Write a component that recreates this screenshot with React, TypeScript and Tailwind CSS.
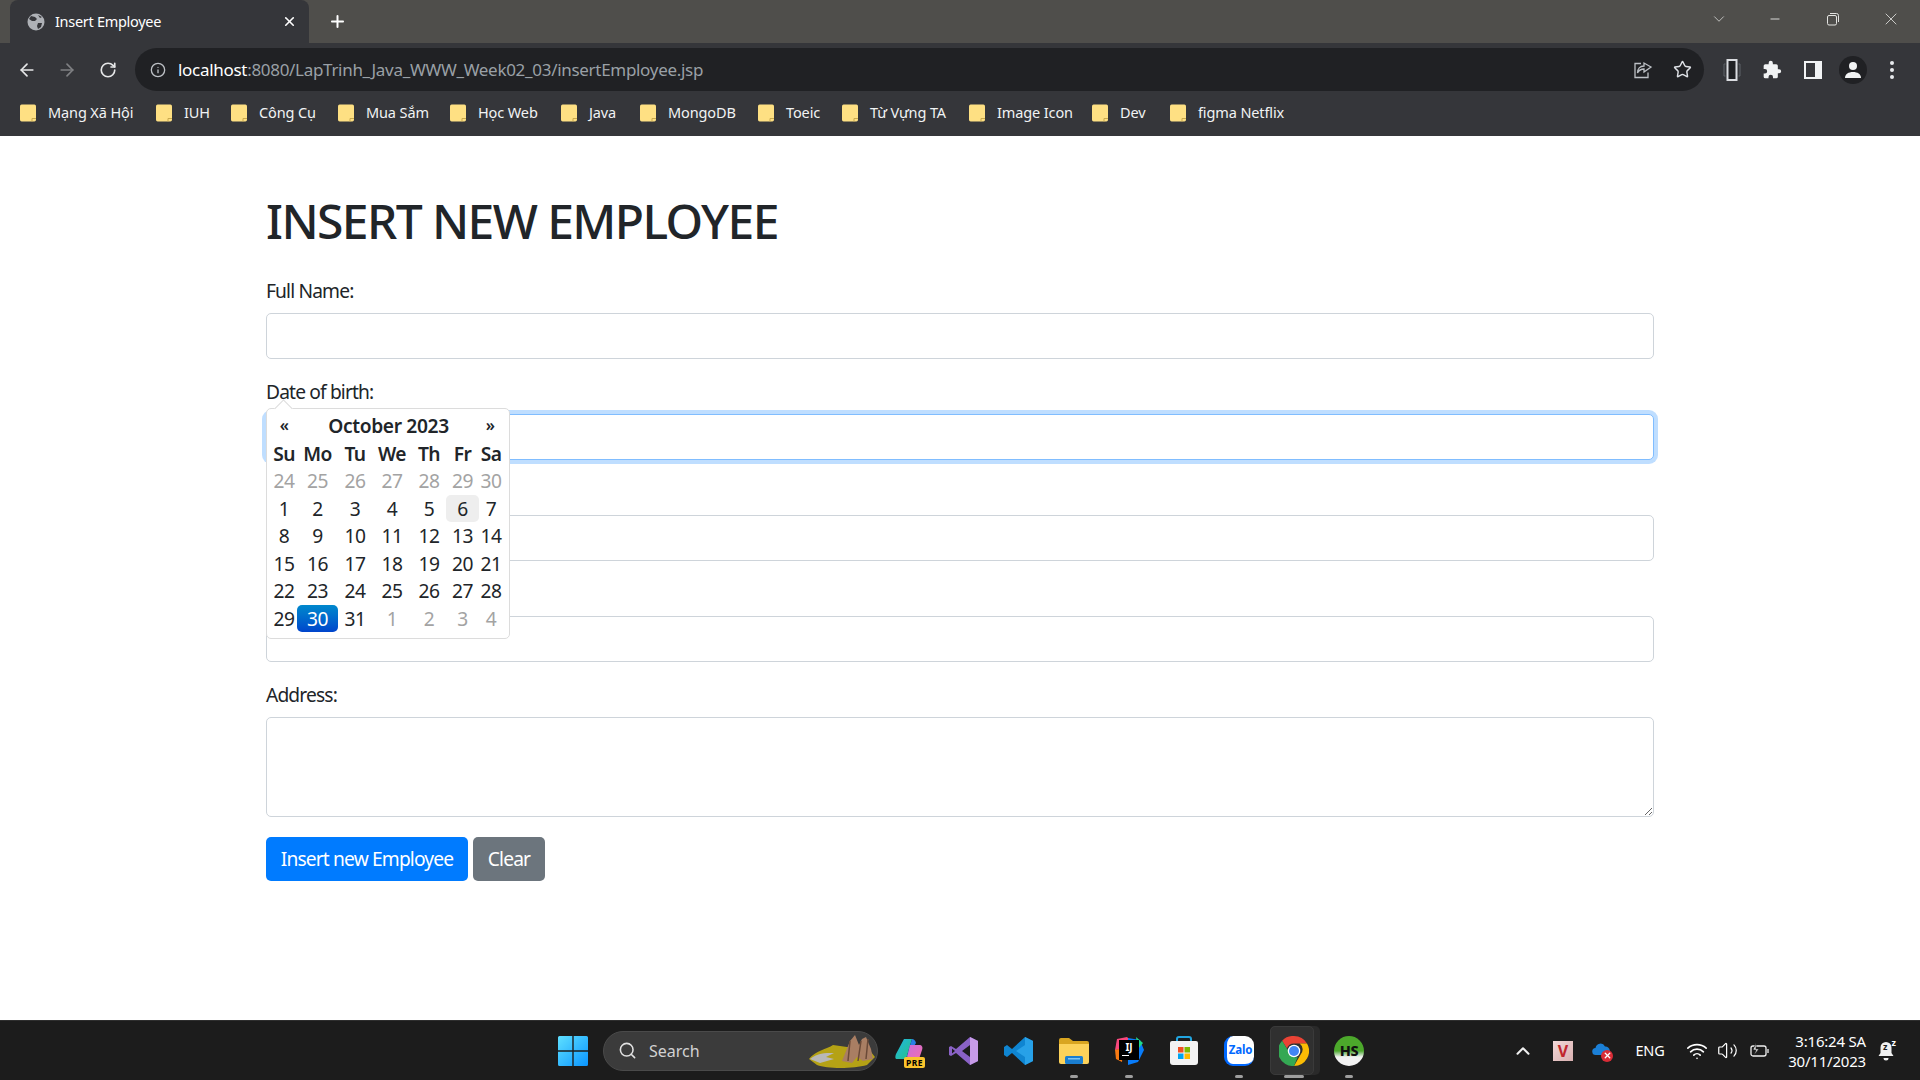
import { ArrowLeft, ArrowRight, ChevronDown, ChevronUp, Info, RotateCw, Search, Star, Volume2, Wifi, X, Plus, Minus } from "lucide-react";

const bookmarks = [
    { name: "Mạng Xã Hội", width: "w-[136px]" },
    { name: "IUH", width: "w-[75px]" },
    { name: "Công Cụ", width: "w-[107px]" },
    { name: "Mua Sắm", width: "w-[112px]" },
    { name: "Học Web", width: "w-[111px]" },
    { name: "Java", width: "w-[79px]" },
    { name: "MongoDB", width: "w-[118px]" },
    { name: "Toeic", width: "w-[84px]" },
    { name: "Từ Vựng TA", width: "w-[127px]" },
    { name: "Image Icon", width: "w-[123px]" },
    { name: "Dev", width: "w-[78px]" },
    { name: "figma Netflix", width: "w-[200px]" },
];

const weekDays = ["Su", "Mo", "Tu", "We", "Th", "Fr", "Sa"];

// Calendar cells: muted = other month
const calendarDays = [
    ...[24, 25, 26, 27, 28, 29, 30].map((day) => ({ day, muted: true })),
    ...Array.from({ length: 31 }, (_, i) => ({ day: i + 1, muted: false })),
    ...[1, 2, 3, 4].map((day) => ({ day, muted: true })),
];

function Folder() {
    return (
        <svg width="16" height="18" viewBox="0 0 16 18" className="shrink-0">
            <path d="M0 2.5C0 1.4.7.5 1.6.5h12.8c.9 0 1.6.9 1.6 2v13c0 1.100-.7 2-1.600 2H1.600C.7 17.500 0 16.600 0 15.500z" fill="#fee083" />
            <path d="M12 17.500v-3h4" fill="none" stroke="#c9a94e" strokeWidth="1" />
        </svg>
    );
}

function BrowserChrome() {
    return (
        <header className="shrink-0 h-[136px] bg-[#35363a] text-white">
            {/* Tab strip */}
            <div className="relative h-[43px] bg-[#4f4e4b] flex items-end pl-[10px]">
                <div className="h-[43px] w-[299px] bg-[#35363a] rounded-t-lg flex items-center pl-[17px] pr-[12px] text-[14.5px]">
                    <svg width="18" height="18" viewBox="0 0 18 18" className="shrink-0">
                        <circle cx="9" cy="9" r="8.500" fill="#aeb1b6" />
                        <path d="M4 3l4 1 2 2-2 2-3 0-3-2zM11 10l4 0-1 4-3 2-1-3zM11 2l4 2-2 1z" fill="#35363a" />
                    </svg>
                    <span className="ml-[10px] flex-1 tracking-[-0.3px]">Insert Employee</span>
                    <X size={15} strokeWidth={2.600} />
                </div>
                <Plus size={19} strokeWidth={2.500} className="ml-[19px] mb-[12px]" />
                <div className="absolute right-0 top-0 h-[38px] flex items-center text-[#e3e3e1]">
                    <ChevronDown size={18} strokeWidth={1} className="mr-[40px]" />
                    <Minus size={14} strokeWidth={1.600} className="mr-[44px]" />
                    <svg width="14" height="14" viewBox="0 0 14 14" fill="none" stroke="currentColor" className="mr-[41px]">
                        <rect x="1.500" y="3.500" width="9" height="9.500" rx="1.500" />
                        <path d="M4 1.500h6.500a2 2 0 0 1 2 2V10" />
                    </svg>
                    <X size={20} strokeWidth={1} className="mr-[19px]" />
                </div>
            </div>

            {/* Toolbar */}
            <div className="h-[48px] flex items-start">
                <div className="w-[135px] h-[43px] mt-[5px] flex items-center shrink-0">
                    <ArrowLeft size={20} strokeWidth={2} className="ml-[17px] text-[#e6e7e8]" />
                    <ArrowRight size={20} strokeWidth={2} className="ml-[20px] text-[#7f8083]" />
                    <RotateCw size={18} strokeWidth={2.200} className="ml-[22px] text-[#e6e7e8]" />
                </div>
                <div className="mt-[5px] w-[1569px] h-[43px] rounded-full bg-[#202124] flex items-center shrink-0">
                    <Info size={16} strokeWidth={2} className="ml-[15px] text-[#bdc1c6]" />
                    <div className="ml-[12px] flex-1 text-[17px] tracking-[-0.3px] text-[#9aa0a6]">
                        <span className="text-white">localhost</span>:8080/LapTrinh_Java_WWW_Week02_03/insertEmployee.jsp
                    </div>
                    <svg width="20" height="20" viewBox="0 0 20 20" fill="none" stroke="#bdc1c6" strokeWidth="1.300" className="mr-[20px]">
                        <path d="M8 3.500H2v14h13v-5M11 3v3C7 6 4.500 9 4.500 13c1.500-3 4-4 6.500-4v3l7-5z" />
                    </svg>
                    <Star size={19} strokeWidth={1.800} className="mr-[12px] text-[#dee1e6]" />
                </div>
                <div className="mt-[5px] h-[43px] flex items-center shrink-0">
                    <svg width="18" height="24" viewBox="0 0 18 24" fill="none" className="ml-[19px]">
                        <rect x="4.500" y="2" width="9" height="20" fill="#202124" stroke="#dadce0" strokeWidth="2" />
                        <path d="M2.500 6H1v12h1.500M15.500 6H17v12h-1.500" stroke="#5f6368" />
                    </svg>
                    <svg width="20" height="20" viewBox="0 0 24 24" fill="#f1f3f4" className="ml-[21px]">
                        <path d="M20.500 11H19V7a2 2 0 0 0-2-2h-4V3.500a2.500 2.500 0 0 0-5 0V5H4a2 2 0 0 0-2 2v3.800h1.500a2.700 2.700 0 0 1 0 5.400H2V20a2 2 0 0 0 2 2h3.800v-1.500a2.700 2.700 0 0 1 5.400 0V22H17a2 2 0 0 0 2-2v-4h1.500a2.500 2.500 0 0 0 0-5z" />
                    </svg>
                    <svg width="18" height="18" viewBox="0 0 18 18" className="ml-[22px]">
                        <path fillRule="evenodd" d="M0 0h18v18H0zM2 2v14h9V2z" fill="#f1f3f4" />
                    </svg>
                    <div className="ml-[17px] w-[28px] h-[28px] rounded-full bg-[#202124] flex items-center justify-center">
                        <svg width="18" height="18" viewBox="0 0 18 18" fill="#f1f3f4">
                            <circle cx="9" cy="5" r="4" />
                            <path d="M1 17c0-4 3.500-6 8-6s8 2 8 6z" />
                        </svg>
                    </div>
                    <svg width="6" height="20" viewBox="0 0 6 20" fill="#e8eaed" className="ml-[22px]">
                        <circle cx="3" cy="3" r="2" />
                        <circle cx="3" cy="10" r="2" />
                        <circle cx="3" cy="17" r="2" />
                    </svg>
                </div>
            </div>

            {/* Bookmarks bar */}
            <div className="h-[45px] -mt-px flex items-center pl-[20px] text-[14.500px] tracking-[-0.12px] text-[#f1f3f4]">
                {bookmarks.map((item) => (
                    <div key={item.name} className={`${item.width} flex items-center gap-[12px] shrink-0`}>
                        <Folder />
                        <span>{item.name}</span>
                    </div>
                ))}
            </div>
        </header>
    );
}

function DatePicker() {
    return (
        <div className="absolute left-0 top-[30px] w-[244px] h-[231px] bg-white border border-[#dcdcdc] rounded-[5px] pt-[3px] pl-[4px] text-[19.200px] leading-[27.500px] tracking-[-0.6px] text-[#212529] z-10">
            {/* Little arrow on top */}
            <div className="absolute left-[10px] -top-[7px] w-[13px] h-[13px] rotate-45 bg-white border-l border-t border-[#dcdcdc]" />
            <div className="relative grid grid-cols-[26px_168px_40px] items-center text-center font-semibold">
                <span className="text-[16px]">«</span>
                <span className="pl-[15px] whitespace-nowrap tracking-[-0.35px]">October 2023</span>
                <span className="text-[16px] pl-[10px]">»</span>
            </div>
            <div className="relative grid grid-cols-[26px_41px_34px_40px_34px_33px_24px] text-center">
                {weekDays.map((day) => (
                    <span key={day} className="font-semibold">{day}</span>
                ))}
                {calendarDays.map((cell, index) => {
                    const isHoverDay = !cell.muted && cell.day === 6;
                    const isActiveDay = !cell.muted && cell.day === 30;
                    return (
                        <span
                            key={index}
                            className={`h-[27.500px] rounded-[5px] ${cell.muted ? "text-[#a3a3a3]" : ""} ${isHoverDay ? "bg-[#eeeeee]" : ""} ${isActiveDay ? "text-white bg-gradient-to-b from-[#0088cc] to-[#0044cc]" : ""}`}
                        >
                            {cell.day}
                        </span>
                    );
                })}
            </div>
        </div>
    );
}

function EmployeeForm() {
    const inputClass = "block w-full h-[46px] bg-white border border-[#ced4da] rounded-[5px] outline-none";
    const labelClass = "block h-[29px] mb-[7px] leading-[27px]";

    return (
        <main className="flex-1 px-[266px] pt-[56px] text-[19.200px] tracking-[-0.85px] text-[#212529]">
            <h1 className="text-[48px] leading-[58px] font-medium tracking-[-1.600px] mb-[27px]">INSERT NEW EMPLOYEE</h1>

            <div className="mb-[19px]">
                <label className={labelClass}>Full Name:</label>
                <input type="text" className={inputClass} />
            </div>

            <div className="relative mb-[19px]">
                <label className={labelClass}>Date of birth:</label>
                <input type="text" className="block w-full h-[46px] bg-white border border-[#80bdff] rounded-[5px] outline-none shadow-[0_0_0_4px_rgba(0,123,255,0.25)]" />
                <DatePicker />
            </div>

            {/* These two labels sit behind the open date picker */}
            <div className="mb-[19px]">
                <div className={labelClass} />
                <input type="text" className={inputClass} />
            </div>
            <div className="mb-[19px]">
                <div className={labelClass} />
                <input type="text" className={inputClass} />
            </div>

            <div className="mb-[20px]">
                <label className={labelClass}>Address:</label>
                <textarea className="block w-full h-[100px] bg-white border border-[#ced4da] rounded-[5px] outline-none" />
            </div>

            <div className="flex gap-[5px]">
                <button className="w-[202px] h-[44px] bg-[#007bff] text-white rounded-[5px]">Insert new Employee</button>
                <button className="w-[72px] h-[44px] bg-[#6c757d] text-white rounded-[5px]">Clear</button>
            </div>
        </main>
    );
}

function ChromeLogo() {
    return (
        <svg width="30" height="30" viewBox="0 0 48 48">
            <path d="M24 0a24 24 0 0 1 20.800 12H24a12 12 0 0 0-11.300 8L5 7.500A24 24 0 0 1 24 0z" fill="#ea4335" />
            <path d="M44.800 12A24 24 0 0 1 24 48l10.400-18a12 12 0 0 0-1.400-18z" fill="#fbbc04" />
            <path d="M24 48A24 24 0 0 1 5 7.500L15 24a12 12 0 0 0 15 9.500z" fill="#34a853" />
            <circle cx="24" cy="24" r="10" fill="#fff" />
            <circle cx="24" cy="24" r="8" fill="#4285f4" />
        </svg>
    );
}

function TaskIcon({ children, running = false }: { children: React.ReactNode; running?: boolean }) {
    return (
        <div className="relative w-[55px] h-[60px] flex items-center justify-center">
            {children}
            {running && <div className="absolute left-[23.500px] bottom-[3px] w-[8px] h-[3px] rounded-full bg-[#9e9e9e]" />}
        </div>
    );
}

function Taskbar() {
    return (
        <footer className="shrink-0 h-[60px] bg-[#1c1c1c] border-t border-[#2e2e2e] flex items-center text-white">
            {/* Start */}
            <div className="ml-[545px] w-[55px] flex justify-center shrink-0">
                <svg width="30" height="30" viewBox="0 0 30 30">
                    <defs>
                        <linearGradient id="winBlue" x1="0" y1="0" x2="1" y2="1">
                            <stop offset="0" stopColor="#5fe0ff" />
                            <stop offset="1" stopColor="#0a95ff" />
                        </linearGradient>
                    </defs>
                    <path d="M0 1.500A1.500 1.500 0 0 1 1.500 0h12.800v14.300H0zM15.700 0h12.800A1.500 1.500 0 0 1 30 1.500v12.800H15.700zM0 15.700h14.300V30H1.500A1.500 1.500 0 0 1 0 28.500zM15.700 15.700H30v12.800a1.500 1.500 0 0 1-1.500 1.500H15.700z" fill="url(#winBlue)" />
                </svg>
            </div>

            {/* Search box */}
            <div className="ml-[3px] w-[275px] h-[40px] rounded-full bg-[#3b3b3b] border border-[#4a4a4a] flex items-center shrink-0 overflow-hidden">
                <Search size={19} strokeWidth={2} className="ml-[14px] text-[#e0e0e0]" />
                <span className="ml-[12px] flex-1 text-[16px] text-[#d2d2d2]">Search</span>
                <svg width="68" height="36" viewBox="0 0 68 36" className="mr-[1px]">
                    <path d="M1 26c6-8 18-10 24-14l14 2 20 0 8 10-8 8c-14 4-40 4-50 0z" fill="#b5a215" />
                    <path d="M2 26c8-6 14-6 24-6l-8 4 8 2-14 4z" fill="#b8b8b8" />
                    <path d="M34 28l8-20 5-6 4 10 3-6 4-2 5 12 2 10-10 2-6-4-5 6z" fill="#a97e63" />
                    <path d="M42 8l-2 20M53 8l-3 20M60 6l-2 20" stroke="#6b4a38" strokeWidth="1.500" fill="none" />
                </svg>
            </div>

            {/* Pinned apps */}
            <div className="ml-[3.500px] flex shrink-0">
                <TaskIcon>
                    <div className="relative">
                        <svg width="28" height="26" viewBox="0 0 28 26">
                            <defs>
                                <linearGradient id="copilotA" x1="0" y1="0" x2="1" y2="1">
                                    <stop offset="0" stopColor="#1fb6e8" />
                                    <stop offset="1" stopColor="#27c281" />
                                </linearGradient>
                                <linearGradient id="copilotB" x1="0" y1="0" x2="1" y2="1">
                                    <stop offset="0" stopColor="#c86ce0" />
                                    <stop offset="1" stopColor="#f56fa8" />
                                </linearGradient>
                            </defs>
                            <path d="M9 1h8l-6 20H2C0 21 0 19 1 16z" fill="url(#copilotA)" />
                            <path d="M17 1c2 0 3 1 4 4l-10 16z" fill="#2a7fe8" />
                            <path d="M15 7h9c3 0 4 2 3 5l-3 9c-1 2-2 3-5 3h-8z" fill="url(#copilotB)" />
                        </svg>
                        <span className="absolute -bottom-[4px] -right-[2px] bg-[#fbc42c] rounded-[2px] text-black text-[8.500px] leading-[11px] font-bold px-[2px] tracking-[0.5px]">PRE</span>
                    </div>
                </TaskIcon>
                <TaskIcon>
                    <svg width="30" height="30" viewBox="0 0 30 30">
                        <path d="M21 1l8 4v20l-8 4-14-12-5 3-2-1V11l2-1 5 3z" fill="#8a62c6" />
                        <path d="M21 1l8 4v20l-8 4z" fill="#c79be8" />
                        <path d="M21 9l-8 6 8 6zM3 12.500v5L6 15z" fill="#1c1c1c" />
                    </svg>
                </TaskIcon>
                <TaskIcon>
                    <svg width="30" height="30" viewBox="0 0 30 30">
                        <path d="M21 1l8 4v20l-8 4L8 17l-5 4-3-2v-8l3-2 5 4z" fill="#0f85d1" />
                        <path d="M21 1l8 4v20l-8 4zM21 9l-9 6 9 6z" fill="#27a1e8" fillRule="evenodd" />
                    </svg>
                </TaskIcon>
                <TaskIcon running>
                    <svg width="30" height="28" viewBox="0 0 30 28">
                        <path d="M0 3a2 2 0 0 1 2-2h8l4 3h14a2 2 0 0 1 2 2v2H0z" fill="#d9a520" />
                        <path d="M0 7h30v18a2 2 0 0 1-2 2H2a2 2 0 0 1-2-2z" fill="#fcd25a" />
                        <rect x="6" y="19" width="18" height="8" rx="1.500" fill="#1a7ed0" />
                        <rect x="9" y="21" width="12" height="1.500" fill="#7fc4f2" />
                    </svg>
                </TaskIcon>
                <TaskIcon running>
                    <div className="relative w-[30px] h-[30px]">
                        <svg width="30" height="30" viewBox="0 0 30 30" className="absolute inset-0">
                            <path d="M3 3l10-2 4 4-6 8-10 1z" fill="#f9477d" />
                            <path d="M1 14l8-2-1 14-6-3z" fill="#f97a12" />
                            <path d="M14 2l12 2 4 10-6 12-10 3z" fill="#087cfa" />
                            <path d="M22 1l7 6-5 6z" fill="#21d789" />
                        </svg>
                        <div className="absolute left-[5px] top-[4px] w-[20px] h-[20px] bg-black text-white text-[10px] leading-[12px] font-bold text-center pt-[1px]">
                            IJ
                            <div className="mx-[3px] mt-[2px] w-[7px] h-[1.500px] bg-white" />
                        </div>
                    </div>
                </TaskIcon>
                <TaskIcon>
                    <svg width="30" height="30" viewBox="0 0 30 30">
                        <path d="M8 6V3a2 2 0 0 1 2-2h10a2 2 0 0 1 2 2v3" fill="none" stroke="#21a5e0" strokeWidth="2" />
                        <path d="M1 7a2 2 0 0 1 2-2h24a2 2 0 0 1 2 2v19a3 3 0 0 1-3 3H4a3 3 0 0 1-3-3z" fill="#f3f3f3" />
                        <rect x="9" y="11" width="5.500" height="5.500" fill="#f25022" />
                        <rect x="15.500" y="11" width="5.500" height="5.500" fill="#7fba00" />
                        <rect x="9" y="17.500" width="5.500" height="5.500" fill="#00a4ef" />
                        <rect x="15.500" y="17.500" width="5.500" height="5.500" fill="#ffb900" />
                    </svg>
                </TaskIcon>
                <TaskIcon running>
                    <div className="relative w-[30px] h-[30px] bg-white rounded-[9px] border-l-[3px] border-b-[2px] border-[#0068ff] flex items-center justify-center">
                        <span className="text-[#0068ff] text-[11.500px] font-bold tracking-[-0.2px]">Zalo</span>
                    </div>
                </TaskIcon>
                <div className="relative w-[55px] h-[60px] flex items-center justify-center">
                    <div className="absolute left-[3px] top-[5px] w-[50px] h-[49px] rounded-[5px] bg-[#2a2a2a]" />
                    <div className="absolute left-[3px] top-[5px] w-[44px] h-[49px] rounded-[5px] bg-[#303030] border border-[#3a3a3a]" />
                    <div className="relative"><ChromeLogo /></div>
                    <div className="absolute left-[17.500px] bottom-[3px] w-[20px] h-[3px] rounded-full bg-[#9e9e9e]" />
                </div>
                <TaskIcon running>
                    <div className="relative w-[30px] h-[30px] rounded-full overflow-hidden bg-gradient-to-b from-[#4ca82b] from-50% to-[#f2f2f2] to-70% flex items-center justify-center">
                        <span className="text-[14.500px] font-extrabold text-[#111] tracking-[-0.5px]">HS</span>
                    </div>
                </TaskIcon>
            </div>

            {/* System tray */}
            <div className="ml-auto flex items-center shrink-0">
                <ChevronUp size={22} strokeWidth={2.200} className="text-[#f0f0f0]" />
                <div className="ml-[19px] w-[20px] h-[20px] bg-gradient-to-br from-[#f3d8d8] to-[#d8b0b0] flex items-center justify-center">
                    <span className="text-[#c0262d] text-[16px] leading-none font-bold">V</span>
                </div>
                <div className="relative ml-[19px] w-[20px] h-[20px]">
                    <svg width="18" height="14" viewBox="0 0 18 14" className="absolute top-[1px] left-0">
                        <path d="M4 13a3.500 3.500 0 0 1-.500-7A5 5 0 0 1 13 4.500 4 4 0 0 1 14 13z" fill="#1b7fd6" />
                    </svg>
                    <div className="absolute -right-[1px] -bottom-[1px] w-[12px] h-[12px] rounded-full bg-[#d92c36] flex items-center justify-center">
                        <X size={9} strokeWidth={3.500} />
                    </div>
                </div>
                <span className="ml-[23px] w-[30px] text-[14.500px] tracking-[-0.2px] text-center">ENG</span>
                <Wifi size={22} strokeWidth={1.800} className="ml-[21px]" />
                <Volume2 size={21} strokeWidth={1.400} className="ml-[9px]" />
                <svg width="20" height="16" viewBox="0 0 20 16" fill="none" stroke="#f0f0f0" strokeWidth="1.300" className="ml-[12px]">
                    <rect x="1" y="3" width="15" height="10" rx="2" />
                    <path d="M18 6v4" />
                    <path d="M6 0L3 7h3l-2 5 5-6H6z" fill="#f0f0f0" stroke="#1c1c1c" strokeWidth="0.700" />
                </svg>
                <div className="ml-[16px] w-[80px] text-right text-[15px] leading-[20px] tracking-[-0.2px]">
                    <div>3:16:24 SA</div>
                    <div>30/11/2023</div>
                </div>
                <div className="relative ml-[12px] mr-[26px] w-[16px] h-[20px]">
                    <svg width="16" height="20" viewBox="0 0 16 20" fill="#f0f0f0">
                        <path d="M8 1a5.500 5.500 0 0 1 5.500 5.500V12l2 3H.5l2-3V6.500A5.500 5.500 0 0 1 8 1z" />
                        <path d="M5.500 17h5a2.500 2.500 0 0 1-5 0z" />
                    </svg>
                    <span className="absolute left-[5px] top-[1px] text-[#1c1c1c] text-[9px] leading-none font-bold">z</span>
                    <span className="absolute -right-[2px] -top-[3px] text-[9px] leading-none font-bold">z</span>
                </div>
            </div>
        </footer>
    );
}

export default function App() {
    return (
        <div className="w-[1920px] h-[1080px] overflow-hidden flex flex-col bg-white font-['Noto_Sans',sans-serif]">
            <BrowserChrome />
            <EmployeeForm />
            <Taskbar />
        </div>
    );
}
